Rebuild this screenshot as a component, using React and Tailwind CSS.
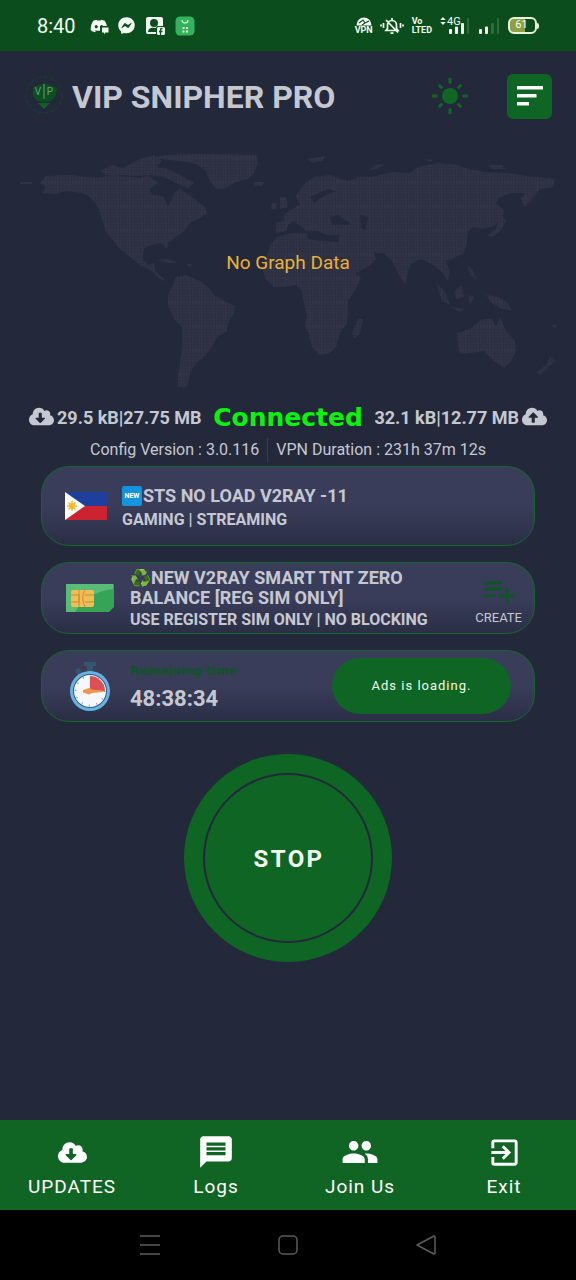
import { useState } from 'react';
import { FaCloudDownloadAlt, FaCloudUploadAlt, FaDiscord, FaFacebookMessenger } from 'react-icons/fa';
import { MdExitToApp, MdMessage, MdPeople, MdPlaylistAdd } from 'react-icons/md';

const LAND = [
  // north america
  'M46 35 L70 34 L98 37 L112 34 L140 37 L148 34 L158 42 L150 48 L152 54 L163 55 L168 66 L171 60 L174 52 L180 48 L190 55 L196 59 L205 66 L207 72 L198 78 L190 82 L184 90 L176 96 L168 102 L167 108 L162 102 L150 104 L144 108 L142 118 L148 124 L154 122 L155 130 L162 136 L166 140 L160 138 L152 130 L140 124 L130 116 L120 108 L112 98 L106 90 L102 78 L98 66 L90 56 L82 52 L66 50 L56 53 L42 52 L46 46 L40 42 Z',
  // arctic islands
  'M100 30 L112 24 L122 27 L132 22 L140 18 L154 14 L162 20 L156 26 L168 28 L180 34 L194 42 L188 47 L176 42 L164 36 L150 34 L136 35 L120 34 L106 34 Z',
  // greenland
  'M150 17 L166 14 L200 13 L256 14 L258 22 L254 32 L248 38 L236 41 L224 48 L216 48 L210 40 L206 30 L196 23 L180 20 Z',
  'M254 41 L264 41 L262 45 L254 45 Z M20 41 L32 41 L32 43 L20 43 Z',
  // caribbean
  'M156 119 L168 118 L178 122 L170 122 Z M186 123 L192 123 L190 126 Z',
  // south america
  'M176 136 L186 134 L200 140 L210 148 L214 154 L224 160 L235 165 L234 172 L229 180 L227 190 L217 196 L212 206 L204 216 L196 222 L190 232 L188 242 L186 247 L178 246 L178 234 L180 222 L182 208 L182 186 L174 178 L168 164 L168 154 L172 146 Z',
  // europe and asia
  'M296 55 L303 44 L314 36 L330 34 L340 38 L349 40 L360 36 L372 36 L392 31 L410 32 L418 26 L438 22 L454 23 L468 28 L484 31 L510 32 L526 35 L555 38 L553 46 L540 48 L530 60 L524 66 L521 58 L526 52 L512 52 L500 56 L496 62 L504 70 L500 80 L492 86 L482 88 L474 86 L468 90 L466 104 L464 112 L452 118 L446 120 L450 130 L448 140 L443 132 L436 126 L430 122 L420 118 L410 124 L407 134 L405 144 L398 132 L392 120 L384 112 L374 112 L376 118 L370 124 L360 130 L352 134 L346 122 L342 112 L342 104 L328 102 L310 98 L304 88 L294 80 L288 84 L286 90 L276 92 L276 82 L284 80 L284 74 L292 68 L300 64 Z',
  // british isles and the arctic coast
  'M280 56 L286 56 L288 66 L280 68 Z M272 62 L277 62 L276 68 L271 68 Z M308 18 L326 15 L322 20 L312 22 Z M368 30 L376 24 L386 23 L376 28 Z M424 18 L434 19 L430 21 Z M488 24 L502 24 L506 28 L492 28 Z',
  // africa
  'M277 96 L292 92 L308 92 L316 98 L332 100 L342 104 L348 118 L354 132 L361 136 L356 148 L348 160 L348 174 L346 184 L340 192 L336 206 L328 213 L320 214 L312 206 L309 194 L305 184 L307 174 L304 162 L302 150 L296 144 L284 146 L274 146 L266 138 L262 128 L268 112 L270 104 Z',
  'M358 178 L363 178 L360 192 L354 198 L352 192 Z',
  // japan and south east asia
  'M500 72 L506 80 L500 90 L492 96 L488 94 L496 88 Z M436 142 L446 152 L450 164 L442 160 Z M454 150 L462 144 L464 156 L456 158 Z M450 166 L464 168 L460 171 Z M467 124 L472 128 L476 138 L470 134 Z M468 154 L474 156 L470 164 Z',
  'M486 154 L498 156 L508 162 L512 170 L502 168 L492 162 Z',
  // australia and new zealand
  'M457 192 L470 188 L482 178 L492 178 L496 186 L500 176 L506 190 L515 200 L516 210 L510 222 L504 227 L494 220 L484 210 L470 212 L460 213 L458 204 Z',
  'M550 216 L556 220 L548 226 L540 234 L537 231 L546 224 Z M552 184 L556 184 L555 188 Z',
];

const SEAS = [
  'M330 76 L338 74 L350 82 L348 84 L332 84 Z',
  'M360 74 L368 76 L365 90 L361 86 Z',
  'M306 90 L318 90 L326 94 L340 94 L338 101 L322 100 L308 98 Z',
  'M310 56 L328 48 L336 50 L322 56 L314 62 Z',
];

const WorldMap = () => (
  <svg viewBox="0 0 576 260" className="block w-full" aria-hidden="true">
    <defs>
      <pattern id="dots" width="3" height="3" patternUnits="userSpaceOnUse">
        <rect width="3" height="3" fill="#2c3042" />
        <rect width="2" height="2" fill="#2f3344" />
      </pattern>
      <pattern id="grid" width="12" height="24" patternUnits="userSpaceOnUse">
        <path d="M0 17.5 H12 M9.500 0 V24" stroke="#383c4a" strokeWidth="1" strokeDasharray="2 1" opacity="0.5" />
      </pattern>
    </defs>
    <path d={LAND.join(' ')} fill="url(#dots)" />
    <path d={LAND.join(' ')} fill="url(#grid)" />
    <path d={SEAS.join(' ')} fill="#24283b" />
  </svg>
);

const DiscordIcon = () => (
  <span className="relative">
    <FaDiscord className="size-[18px]" />
    <svg viewBox="0 0 9 9" className="absolute -right-px bottom-0 size-[9px]" aria-hidden="true">
      <path d="M0 0h9v9H0z" fill="#0b4d1c" />
      <path d="M2 1.500h6.500v5H5.500L4 8.500v-2H2z" fill="#f4fff2" />
    </svg>
  </span>
);

const ContactIcon = () => (
  <svg viewBox="0 0 20 20" className="size-5" aria-hidden="true">
    <path fill="#f4fff2" d="M3 1h13a2 2 0 0 1 2 2v7h-5a2 2 0 0 0-2 2v6H3a2 2 0 0 1-2-2V3a2 2 0 0 1 2-2z" />
    <circle cx="9" cy="7" r="4" fill="#0b4d1c" />
    <path fill="#0b4d1c" d="M3 16c0-4 4-5 8-4v4z" />
    <rect x="12" y="11" width="8" height="8" rx="1.500" fill="#f4fff2" />
    <path d="M17.500 12.500h-1q-1 0-1 1V19M14 15.500h3.500" fill="none" stroke="#0b4d1c" strokeWidth="1.300" />
  </svg>
);

const StoreIcon = () => (
  <svg viewBox="0 0 20 20" className="size-5" aria-hidden="true">
    <rect x="0.500" y="0.500" width="19" height="19" rx="4.500" fill="#35b35c" />
    <path d="M7 4c0 4 6 4 6 0" fill="none" stroke="#d7ffd9" strokeWidth="1.200" />
    <path d="M7.500 11h2v2h-2zM11 11h2v2h-2zM7.500 14.500h2v2h-2zM11 14.500h2v2h-2z" fill="#e3ffe3" />
  </svg>
);

const VpnIcon = () => (
  <span className="flex w-4 flex-col items-center text-[9px] leading-[9px] font-bold">
    <svg viewBox="0 0 16 9" className="h-[9px] w-4" aria-hidden="true">
      <path d="M0.500 8.500a7.500 8 0 0 1 15 0z" fill="#f4fff2" />
      <path d="M3 6l4-3 2 3 4-2M6 8l3-2" stroke="#0b4d1c" strokeWidth="1.200" fill="none" />
    </svg>
    VPN
  </span>
);

const MutedBellIcon = () => (
  <svg viewBox="0 0 24 18" className="h-[18px] w-6" fill="none" stroke="#f4fff2" strokeWidth="1.700" aria-hidden="true">
    <path d="M6 13.500h12l-1.500-2V8a4.500 4.500 0 0 0-9 0v3.500zM12 1v2.500M10.500 16.200h3M6 3l12 12.500" />
    <path d="M3.500 6v5M20.500 6v5M1 7.500v2M23 7.500v2" />
  </svg>
);

const SignalBars = ({ bars }) => (
  <svg viewBox="0 0 22 18" className="h-[18px] w-[22px]" aria-hidden="true">
    <rect x="1" y="12" width="3" height="5" rx="1" fill="#f4fff2" />
    <rect x="7" y="9.500" width="3" height="7.500" rx="1" fill="#f4fff2" />
    <rect x="13" y="6" width="3" height="11" rx="1" fill={bars > 2 ? '#f4fff2' : '#2f6b3b'} />
    <rect x="19" y="1" width="2" height="16" rx="1" fill="#2f6b3b" />
  </svg>
);

const StatusBar = () => (
  <div className="flex h-[51px] items-center justify-between bg-[#0b4d1c] px-[37px] text-[#f4fff2]">
    <div className="flex items-center gap-2.5">
      <span className="mr-1 text-xl">8:40</span>
      <DiscordIcon />
      <FaFacebookMessenger className="size-[17px]" />
      <ContactIcon />
      <StoreIcon />
    </div>
    <div className="flex items-center gap-2">
      <VpnIcon />
      <MutedBellIcon />
      <span className="flex flex-col text-[9px] leading-[9px] font-bold">
        <span>Vo</span>
        <span>LTED</span>
      </span>
      <div className="relative flex w-[30px] justify-end">
        <SignalBars bars={3} />
        <span className="absolute top-0 left-0 flex items-center text-[11px] leading-[9px]">
          <svg viewBox="0 0 6 9" className="mr-px h-2 w-1.5" fill="#f4fff2" aria-hidden="true">
            <path d="M3 0l3 3.500H0zM3 9l3-3.500H0z" />
          </svg>
          4G
        </span>
      </div>
      <SignalBars bars={2} />
      <div className="flex items-center">
        <span className="flex h-[17px] w-[29px] items-center justify-center rounded-md border-2 border-[#e6f5dc] bg-linear-to-r from-[#8e9f47] from-60% to-[#0b4d1c] to-60% pr-0.5 text-[11px]">
          61
        </span>
        <span className="h-1.5 w-0.5 rounded-r bg-[#e6f5dc]" />
      </div>
    </div>
  </div>
);

const Logo = () => (
  <svg viewBox="0 0 40 40" className="size-10" aria-hidden="true">
    <circle cx="20" cy="19" r="18" fill="none" stroke="#17432d" strokeWidth="1" strokeDasharray="4 2" />
    <path d="M9 12l6-3 5-2 6 2 7 3-1 8-5 5-7 1-7-1-4-5z" fill="#0c4f21" />
    <path d="M14 27h12l-6 6z" fill="#11602a" />
    <path d="M20 8v15" stroke="#6c9a85" strokeWidth="1" />
    <text x="14" y="19" textAnchor="middle" fontSize="10" fill="#6c9a85">V</text>
    <text x="26" y="19" textAnchor="middle" fontSize="10" fill="#6c9a85">P</text>
  </svg>
);

const SunIcon = () => (
  <svg viewBox="0 0 38 38" className="size-[38px]" fill="#106725" aria-hidden="true">
    <circle cx="19" cy="19" r="8" />
    {[0, 90, 180, 270].map((a) => (
      <path key={a} d="M17.500 1h3v5l-1.500 1-1.500-1z" transform={`rotate(${a} 19 19)`} />
    ))}
    {[45, 135, 225, 315].map((a) => (
      <path key={a} d="M17.500 3h3v5h-3z" transform={`rotate(${a} 19 19)`} />
    ))}
  </svg>
);

const Header = () => (
  <header className="flex h-[90px] items-center px-6">
    <Logo />
    <h1 className="ml-2 pt-0.5 text-[32px] leading-10 font-bold">VIP SNIPHER PRO</h1>
    <button type="button" aria-label="Toggle theme" className="ml-auto">
      <SunIcon />
    </button>
    <button type="button" aria-label="Menu" className="ml-[38px] flex size-[45px] items-center justify-center rounded-md bg-[#0f6524]">
      <svg viewBox="0 0 26 20" className="h-5 w-[26px]" fill="#fff" aria-hidden="true">
        <path d="M0 0h26v3.500H0zM0 8h19.500v3.500H0zM0 16h12v3.500H0z" />
      </svg>
    </button>
  </header>
);

const FlagIcon = () => (
  <svg viewBox="0 0 42 28" className="h-7 w-[42px]" aria-hidden="true">
    <path fill="#1f3f9d" d="M0 0h42v14H0z" />
    <path fill="#cb2430" d="M0 14h42v14H0z" />
    <path fill="#fff" d="M0 0l20 14L0 28z" />
    <path stroke="#f6bb2e" strokeWidth="1.500" d="M2 14h10M7 9v10M3.500 10.500l7 7M10.500 10.500l-7 7" />
    <circle cx="7" cy="14" r="3" fill="#f6bb2e" />
  </svg>
);

const SimIcon = () => (
  <svg viewBox="0 0 50 30" className="h-[30px] w-[50px]" aria-hidden="true">
    <path fill="#35a457" d="M1 1h47a1 1 0 0 1 1 1v22l-5 5H2a1 1 0 0 1-1-1z" />
    <path fill="#59bd78" d="M1 1h47v5C34 7 18 16 10 29H2a1 1 0 0 1-1-1z" />
    <rect x="6" y="7" width="23" height="17" rx="2" fill="#f3bd55" />
    <path d="M6 12h8v7H6M14 7v17M20 7c-3 5-3 10 0 17M20 12h9M20 19h9" fill="none" stroke="#c58b36" strokeWidth="1" />
  </svg>
);

const StopwatchIcon = () => (
  <svg viewBox="0 0 42 50" className="h-[50px] w-[42px]" aria-hidden="true">
    <path fill="#35566f" d="M15 1h12v4h-3v6h-6V5h-3zM6 9l4-2 3 4-4 3z" />
    <circle cx="21" cy="30" r="20" fill="#68b3e3" />
    <circle cx="21" cy="30" r="17" fill="#315a82" />
    <circle cx="21" cy="30" r="16" fill="#f5f7fb" />
    <path fill="#dd5058" d="M21 30V15a15 15 0 0 1 15 15z" />
    <circle cx="21" cy="30" r="14.500" fill="none" stroke="#7390a9" strokeWidth="1.500" strokeDasharray="1 6.590" />
    <path fill="#ef964f" d="M14 29l6-2 3 1.500 11 1v1.500l-11 1-3 1.500-6-2z" />
  </svg>
);

const NewBadge = () => (
  <span className="mr-px inline-flex size-5 items-center justify-center rounded-xs bg-[#1593dc] align-text-bottom text-[7px] font-bold text-white">
    NEW
  </span>
);

const Card = ({ children, className }) => (
  <section className={`flex items-center rounded-[28px] border border-[#14682b] bg-linear-to-b from-[#3a3d5a] from-50% to-[#2b2e46] ${className}`}>
    {children}
  </section>
);

const TABS = [
  { label: 'UPDATES', icon: <FaCloudDownloadAlt className="size-[29px]" /> },
  { label: 'Logs', icon: <MdMessage className="size-[38px]" /> },
  { label: 'Join Us', icon: <MdPeople className="size-[38px]" /> },
  { label: 'Exit', icon: <MdExitToApp className="size-[35px]" /> },
];

const BottomNav = () => (
  <nav className="mt-auto grid h-[90px] grid-cols-4 bg-[#106424] text-white">
    {TABS.map((tab) => (
      <button key={tab.label} type="button" className="flex flex-col items-center pt-3">
        <span className="flex h-10 items-center">{tab.icon}</span>
        <span className="text-[19px] leading-[30px] tracking-wider">{tab.label}</span>
      </button>
    ))}
  </nav>
);

const SystemNav = () => (
  <div className="flex h-[70px] items-center justify-center gap-[116px] bg-black">
    <button type="button" aria-label="Recent apps">
      <svg viewBox="0 0 22 22" className="size-[22px]" stroke="#5c5c5c" strokeWidth="1.500" aria-hidden="true">
        <path d="M1 2h20M1 11h20M1 20h20" />
      </svg>
    </button>
    <button type="button" aria-label="Home">
      <svg viewBox="0 0 22 22" className="size-[22px]" fill="none" stroke="#5c5c5c" strokeWidth="1.500" aria-hidden="true">
        <rect x="2" y="2" width="18" height="18" rx="4" />
      </svg>
    </button>
    <button type="button" aria-label="Back">
      <svg viewBox="0 0 22 22" className="size-[22px]" fill="none" stroke="#5c5c5c" strokeWidth="1.500" strokeLinejoin="round" aria-hidden="true">
        <path d="M2 11L19 2q1 0 1 1v16q0 1-1 1z" />
      </svg>
    </button>
  </div>
);

const App = () => {
  const [running, setRunning] = useState(true);

  return (
    <div className="flex min-h-screen flex-col bg-[#24283b] font-[Roboto,sans-serif] text-[#c6c8d1]">
      <StatusBar />
      <Header />

      <main className="pb-8">
        <div className="relative pb-px">
          <WorldMap />
          <p className="absolute inset-x-0 top-[110px] text-center text-[19px] leading-6 text-[#e9b13a]">No Graph Data</p>
        </div>

        <div className="flex h-8 items-center justify-between px-[29px] text-lg font-bold">
          <span className="flex items-center gap-[3px]">
            <FaCloudDownloadAlt className="mb-1 size-[25px]" />
            29.5 kB|27.75 MB
          </span>
          <strong className="font-['DejaVu_Sans'] text-[25px] font-bold text-[#06f50c]">Connected</strong>
          <span className="flex items-center gap-[3px]">
            32.1 kB|12.77 MB
            <FaCloudUploadAlt className="mb-1 size-[25px]" />
          </span>
        </div>

        <div className="flex h-8 items-center justify-center text-base">
          <span>Config Version : 3.0.116</span>
          <span className="mx-2 h-6 w-px bg-[#3a3e50]" />
          <span>VPN Duration : 231h 37m 12s</span>
        </div>

        <div className="flex flex-col gap-4 px-[41px]">
          <Card className="h-20 pl-[23px]">
            <FlagIcon />
            <div className="ml-[15px] pt-1">
              <h2 className="text-lg leading-6 font-bold">
                <NewBadge />
                STS NO LOAD V2RAY -11
              </h2>
              <p className="text-base leading-6 font-bold">GAMING | STREAMING</p>
            </div>
          </Card>

          <Card className="h-[72px] pr-3 pl-[23px]">
            <SimIcon />
            <div className="ml-[15px] flex-1 pt-1">
              <h2 className="text-lg leading-5 font-bold">
                <span className="inline-flex h-5 items-center overflow-hidden align-bottom text-[17px]">♻️</span>
                NEW V2RAY SMART TNT ZERO BALANCE [REG SIM ONLY]
              </h2>
              <p className="text-base leading-6 font-bold">USE REGISTER SIM ONLY | NO BLOCKING</p>
            </div>
            <button type="button" className="flex flex-col items-center pt-0.5 text-[13px] leading-4">
              <MdPlaylistAdd className="size-[38px] text-[#0f5527]" />
              CREATE
            </button>
          </Card>

          <Card className="h-[72px] pr-[23px] pl-[27px]">
            <StopwatchIcon />
            <div className="ml-[19px] pt-1">
              <p className="font-['DejaVu_Sans'] text-xs font-bold text-[#0f5527]">Remaining time</p>
              <p className="mt-1.5 text-[22px] leading-7 font-bold">48:38:34</p>
            </div>
            <button type="button" className="ml-auto h-14 w-[179px] rounded-full bg-[#0f6524] text-[13px] tracking-[1px] text-[#eefbe9]">
              Ads is loading.
            </button>
          </Card>
        </div>

        <button
          type="button"
          onClick={() => setRunning(!running)}
          className="mx-auto mt-8 flex size-52 items-center justify-center rounded-full bg-[#0f6524]"
        >
          <span className="flex size-[170px] items-center justify-center rounded-full border-2 border-[#24283b] pt-0.5 pl-0.5 text-2xl font-bold tracking-widest text-[#f4fff2]">
            {running ? 'STOP' : 'START'}
          </span>
        </button>
      </main>

      <BottomNav />
      <SystemNav />
    </div>
  );
};

export default App;
